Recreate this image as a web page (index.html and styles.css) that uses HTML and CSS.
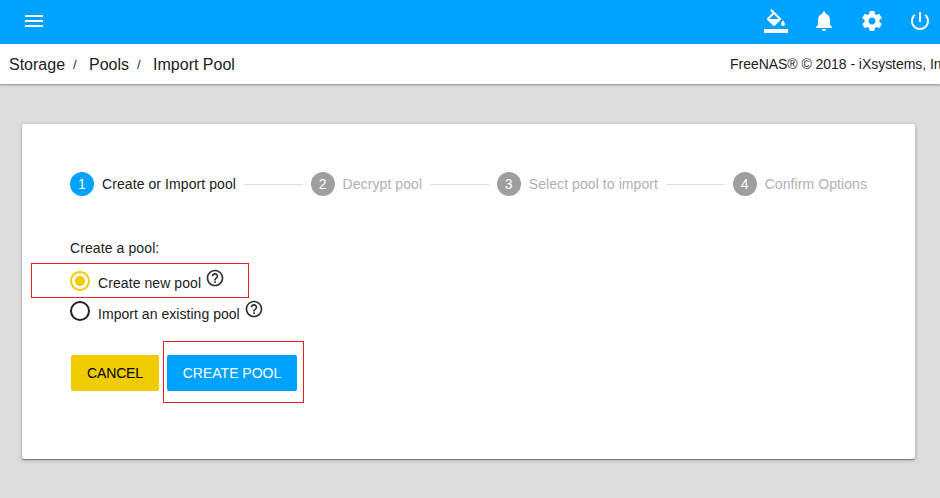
FILE: index.html
```html
<!DOCTYPE html>
<html lang="en">
<head>
<meta charset="utf-8">
<title>Import Pool</title>
<link rel="stylesheet" href="styles.css">
</head>
<body>
<header class="topbar">
  <svg class="icon" viewBox="0 0 24 24"><path d="M3 18h18v-2H3v2zm0-5h18v-2H3v2zm0-7v2h18V6H3z"/></svg>
  <nav class="actions">
    <svg class="icon" viewBox="0 0 24 24"><path d="M16.56 8.94L7.62 0 6.21 1.41l2.38 2.38-5.15 5.15c-.59.59-.59 1.54 0 2.12l5.5 5.5c.29.29.68.44 1.06.44s.77-.15 1.06-.44l5.5-5.5c.59-.58.59-1.53 0-2.12zM5.21 10L10 5.21 14.79 10H5.21zM19 11.5s-2 2.17-2 3.5c0 1.1.9 2 2 2s2-.9 2-2c0-1.33-2-3.5-2-3.5zM0 20h24v4H0v-4z"/></svg>
    <svg class="icon" viewBox="0 0 24 24"><path d="M12 22c1.1 0 2-.9 2-2h-4c0 1.100.89 2 2 2zm6-6v-5c0-3.070-1.640-5.640-4.500-6.320V4c0-.83-.67-1.500-1.500-1.500s-1.500.67-1.500 1.500v.68C7.630 5.360 6 7.920 6 11v5l-2 2v1h16v-1l-2-2z"/></svg>
    <svg class="icon" viewBox="0 0 24 24"><path d="M19.430 12.980c.04-.32.07-.64.07-.98s-.03-.66-.07-.98l2.110-1.650c.19-.15.24-.42.12-.64l-2-3.460c-.12-.22-.39-.3-.61-.22l-2.490 1c-.52-.4-1.080-.73-1.690-.98l-.38-2.650C14.460 2.180 14.250 2 14 2h-4c-.25 0-.46.18-.49.42l-.38 2.650c-.61.25-1.170.59-1.690.98l-2.490-1c-.23-.09-.49 0-.61.22l-2 3.460c-.13.22-.07.49.12.64l2.110 1.650c-.04.32-.07.65-.07.98s.03.66.07.98l-2.110 1.650c-.19.15-.24.42-.12.64l2 3.460c.12.22.39.3.61.22l2.490-1c.52.4 1.080.73 1.690.98l.38 2.650c.03.24.24.42.49.42h4c.25 0 .46-.18.49-.42l.38-2.650c.61-.25 1.170-.59 1.690-.98l2.490 1c.23.09.49 0 .61-.22l2-3.460c.12-.22.07-.49-.12-.64l-2.110-1.650zM12 15.500c-1.930 0-3.500-1.570-3.500-3.500s1.570-3.500 3.500-3.500 3.500 1.570 3.500 3.500-1.570 3.500-3.500 3.500z"/></svg>
    <svg class="icon" viewBox="0 0 24 24"><path d="M13 3h-2v10h2V3zm4.830 2.170l-1.420 1.420C17.990 7.860 19 9.810 19 12c0 3.870-3.130 7-7 7s-7-3.130-7-7c0-2.190 1.010-4.140 2.580-5.420L6.170 5.170C4.230 6.820 3 9.260 3 12c0 4.970 4.030 9 9 9s9-4.030 9-9c0-2.740-1.230-5.180-3.170-6.830z"/></svg>
  </nav>
</header>
<div class="crumbbar">
  <nav class="crumbs"><span>Storage</span><span class="sep">/</span><span>Pools</span><span class="sep">/</span><span>Import Pool</span></nav>
  <span class="copyright">FreeNAS® © 2018 - iXsystems, Inc.</span>
</div>
<main class="card">
  <div class="stepper">
    <div class="step active"><span class="num">1</span>Create or Import pool</div>
    <i class="line"></i>
    <div class="step"><span class="num">2</span>Decrypt pool</div>
    <i class="line"></i>
    <div class="step"><span class="num">3</span>Select pool to import</div>
    <i class="line"></i>
    <div class="step"><span class="num">4</span>Confirm Options</div>
  </div>
  <p class="legend">Create a pool:</p>
  <div class="option first">
    <span class="radio checked"></span><span class="label">Create new pool</span>
    <svg class="help" viewBox="0 0 24 24"><path d="M11 18h2v-2h-2v2zm1-16C6.480 2 2 6.480 2 12s4.480 10 10 10 10-4.480 10-10S17.520 2 12 2zm0 18c-4.410 0-8-3.590-8-8s3.590-8 8-8 8 3.590 8 8-3.590 8-8 8zm0-14c-2.210 0-4 1.790-4 4h2c0-1.100.9-2 2-2s2 .9 2 2c0 2-3 1.750-3 5h2c0-2.250 3-2.500 3-5 0-2.210-1.790-4-4-4z"/></svg>
    <span class="mark mark-option"></span>
  </div>
  <div class="option second">
    <span class="radio"></span><span class="label">Import an existing pool</span>
    <svg class="help" viewBox="0 0 24 24"><path d="M11 18h2v-2h-2v2zm1-16C6.480 2 2 6.480 2 12s4.480 10 10 10 10-4.480 10-10S17.520 2 12 2zm0 18c-4.410 0-8-3.590-8-8s3.590-8 8-8 8 3.590 8 8-3.590 8-8 8zm0-14c-2.210 0-4 1.790-4 4h2c0-1.100.9-2 2-2s2 .9 2 2c0 2-3 1.750-3 5h2c0-2.250 3-2.500 3-5 0-2.210-1.790-4-4-4z"/></svg>
  </div>
  <div class="buttons">
    <button class="btn cancel">CANCEL</button>
    <div class="marked"><button class="btn create">CREATE POOL</button><span class="mark mark-button"></span></div>
  </div>
</main>
</body>
</html>
```

FILE: styles.css
```css
* { box-sizing: border-box; }
body {
  margin: 0;
  height: 498px;
  overflow: hidden;
  background: #dcdcdc;
  color: #212121;
  font: 14px/20px "Liberation Sans", Arial, sans-serif;
}
.topbar {
  height: 44px;
  padding: 9px 8px 0 22px;
  display: flex;
  justify-content: space-between;
  background: #00a2ff;
}
.icon { display: block; width: 24px; height: 24px; fill: #fff; }
.actions { display: flex; gap: 24px; }
.crumbbar {
  height: 40px;
  padding-left: 9px;
  display: flex;
  align-items: center;
  background: #fff;
  box-shadow: 0 1px 2px rgba(0, 0, 0, .35);
  white-space: nowrap;
}
.crumbs {
  width: 721px;
  flex: none;
  display: flex;
  align-items: center;
  padding-top: 2px;
  font-size: 16px;
}
.sep { width: 24px; padding-left: 8px; font-size: 13px; }
.copyright { flex: none; letter-spacing: -.04px; }
.card {
  width: 893px;
  height: 335px;
  margin: 40px 0 0 22px;
  padding: 48px;
  border-radius: 2px;
  background: #fff;
  box-shadow: 0 1px 1px rgba(0, 0, 0, .4), 0 1px 4px rgba(0, 0, 0, .22);
}
.stepper { display: flex; align-items: center; height: 24px; }
.step {
  display: flex;
  align-items: center;
  gap: 8px;
  color: #b0b0b0;
  letter-spacing: .08px;
  white-space: nowrap;
}
.step.active { color: #212121; }
.num {
  width: 24px;
  height: 24px;
  border-radius: 50%;
  background: #9e9e9e;
  color: #fff;
  line-height: 24px;
  text-align: center;
}
.active .num { background: #00a2ff; }
.line { flex: 1; height: 1px; margin: 1px 8px 0; background: #e0e0e0; }
.legend { margin: 42px 0 0; letter-spacing: .1px; }
.option { position: relative; display: flex; height: 31px; }
.option.first { margin-top: 9px; }
.radio {
  width: 20px;
  height: 20px;
  margin-top: 4px;
  border: 2px solid #212121;
  border-radius: 50%;
}
.second .radio { margin-top: 3px; }
.radio.checked {
  border-color: #f0cb00;
  background: radial-gradient(circle, #f0cb00 4.7px, transparent 5.3px);
}
.label { margin: 6px 4px 0 8px; letter-spacing: .04px; }
.first .label { letter-spacing: .08px; }
.help { width: 20px; height: 20px; margin-top: 1px; fill: #303030; }
.mark { position: absolute; border: 1px solid #ed1c24; pointer-events: none; }
.mark-option { left: -39px; top: -4px; width: 218px; height: 35px; }
.buttons { display: flex; gap: 8px; margin: 26px 0 0 1px; }
.marked { position: relative; }
.btn {
  display: block;
  width: 88px;
  height: 36px;
  padding: 0;
  border: 0;
  border-radius: 2px;
  font: 14px/36px "Liberation Sans", Arial, sans-serif;
}
.cancel { background: #f0cb00; color: #000; letter-spacing: -.15px; }
.create { width: 130px; background: #00a2ff; color: #fff; }
.mark-button { left: -4px; top: -14px; width: 141px; height: 62px; }
```
